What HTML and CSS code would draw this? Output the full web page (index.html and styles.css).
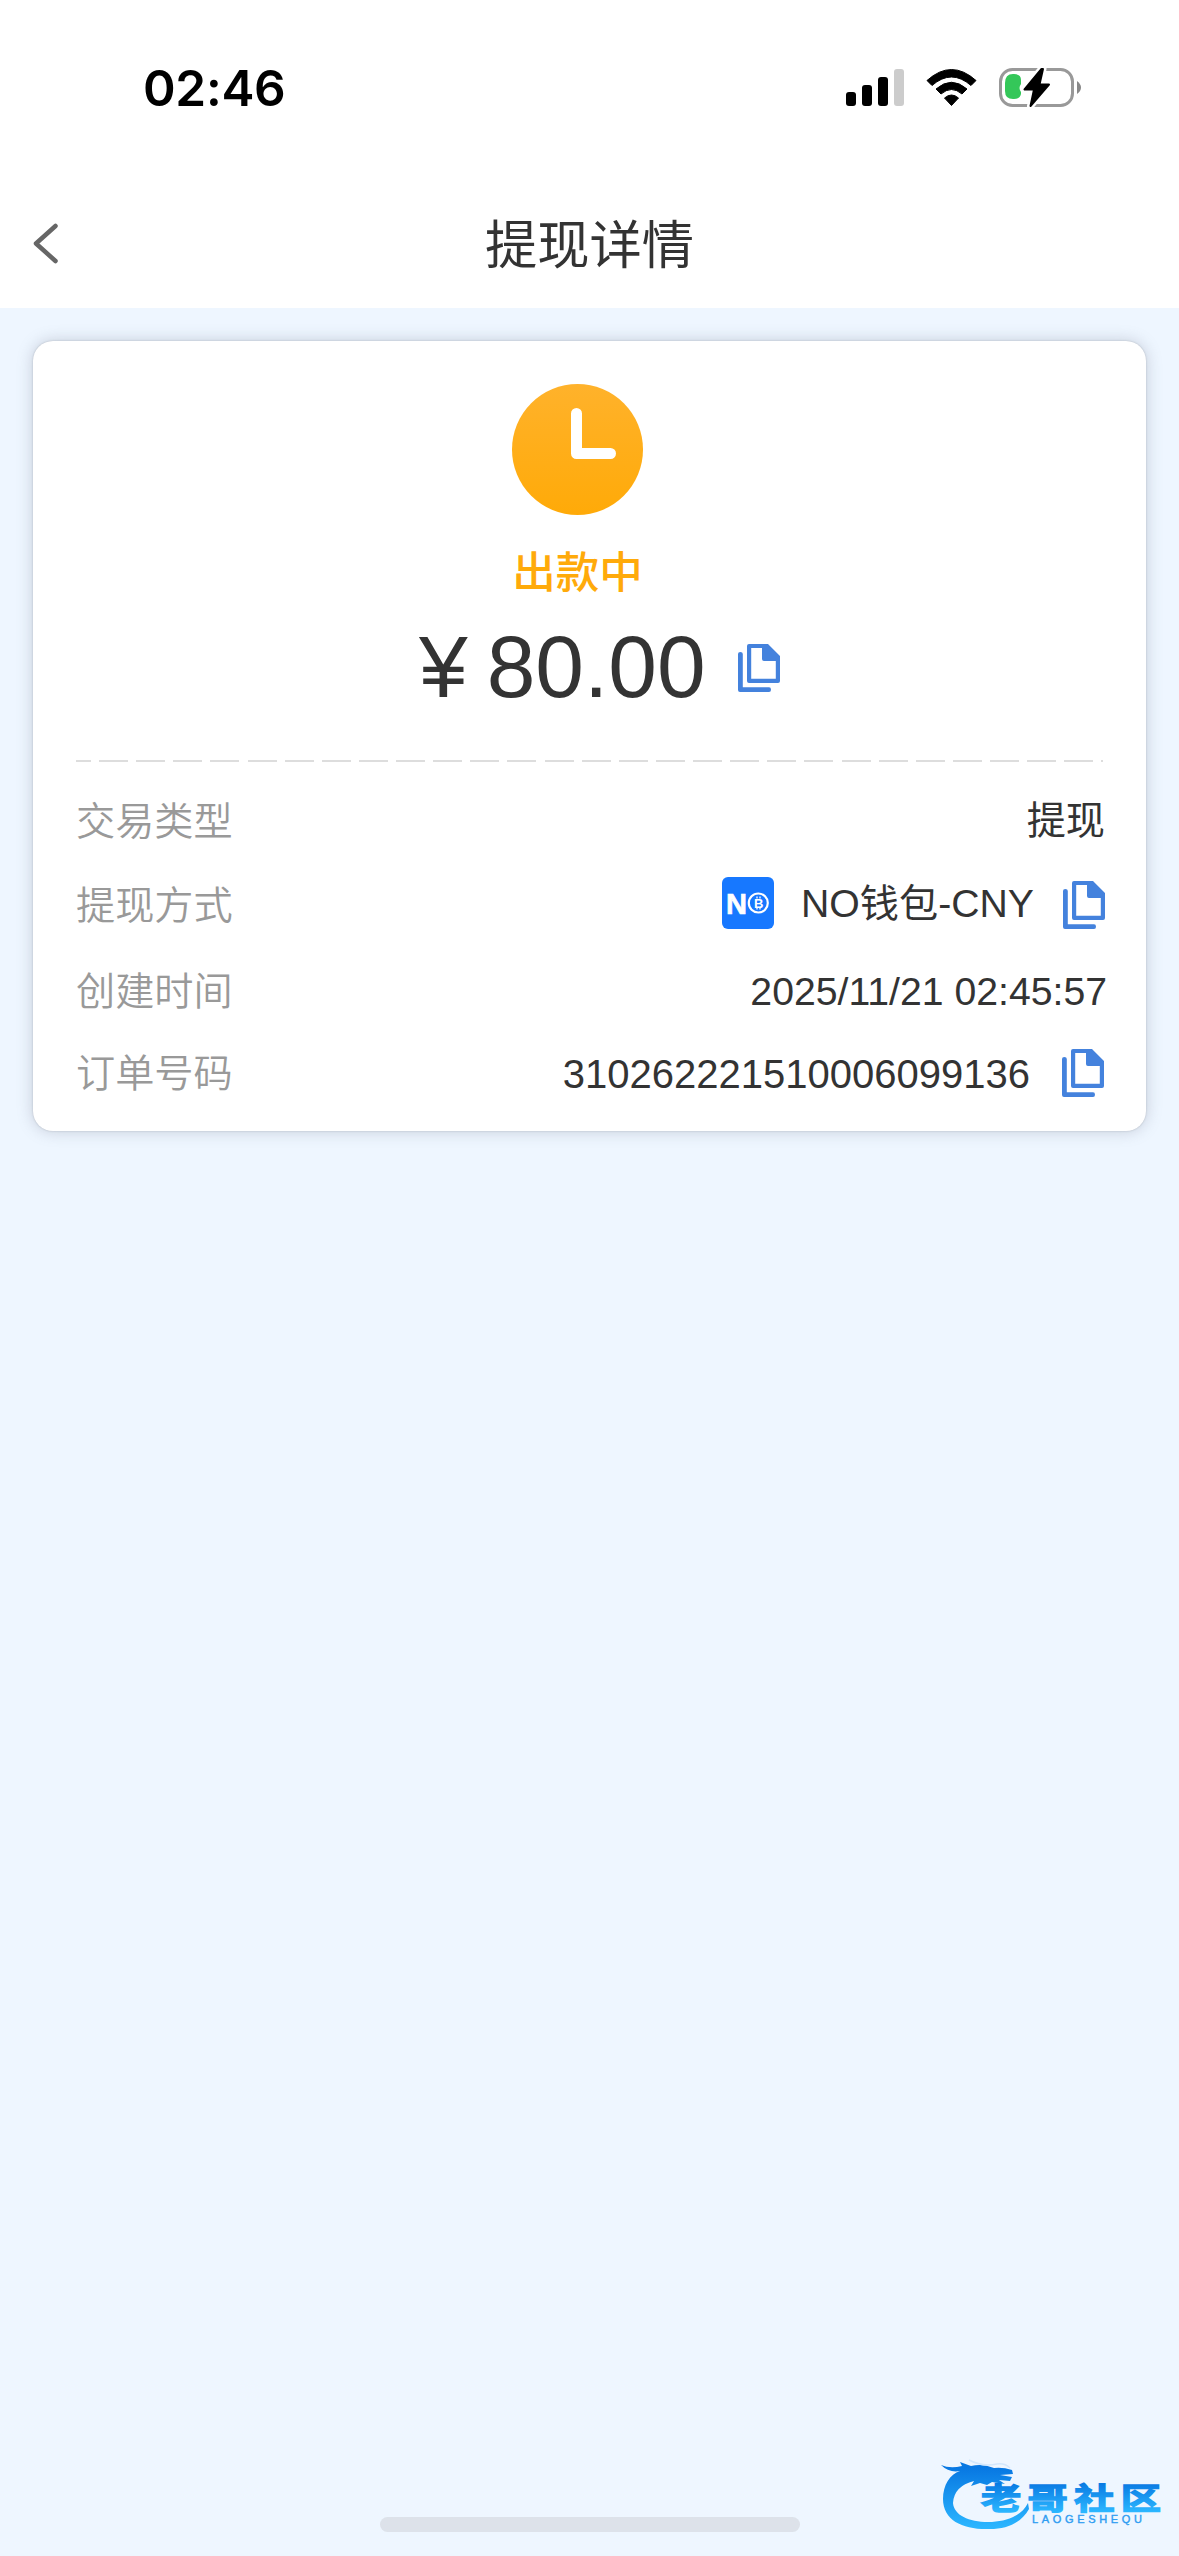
FILE: index.html
```html
<!DOCTYPE html>
<html lang="zh-CN">
<head>
<meta charset="utf-8">
<title>提现详情</title>
<link rel="stylesheet" href="styles.css">
</head>
<body>
<svg class="defs" width="0" height="0" aria-hidden="true">
  <symbol id="copy" viewBox="0 0 42 48">
    <path fill="#4482dd" fill-rule="evenodd" d="M11 0H30L42 12V37Q42 39 40 39H11Q9 39 9 37V2Q9 0 11 0ZM13.200 4V34.800H37.800V17H26Q24 17 24 15V4Z"/>
    <path fill="#4482dd" d="M0 10Q0 8 2.300 8Q4.800 8 4.800 10V43.300H31Q33 43.300 33 45.700Q33 48 31 48H2Q0 48 0 46Z"/>
  </symbol>
</svg>
<div class="statusbar">
  <span class="time">02:46</span>
  <svg class="indicators" width="236" height="44" viewBox="0 0 236 44">
    <rect x="0" y="26" width="10" height="14" rx="3"/>
    <rect x="16" y="19" width="10" height="21" rx="3"/>
    <rect x="32" y="11" width="10" height="29" rx="3"/>
    <rect x="48" y="3" width="10" height="37" rx="3" fill="#ccc"/>
    <path d="M81 14.500Q105.500 -7.500 130 14.500L125 19.500Q105.500 2.500 86 19.500Z" stroke="#000" stroke-linejoin="round" stroke-width="1"/>
    <path d="M90 23Q105.500 9.500 121 23L116 28Q105.500 19 95 28Z" stroke="#000" stroke-linejoin="round" stroke-width="1"/>
    <path d="M98.500 32Q105.500 26 112.500 32L105.500 39.500Z" stroke="#000" stroke-linejoin="round" stroke-width="1"/>
    <rect x="154.500" y="3.500" width="72" height="36" rx="12" fill="none" stroke="#999" stroke-width="3"/>
    <path d="M231 15Q235 18 235 21.500Q235 25 231 28Z" fill="#888"/>
    <path d="M159 17Q159 8 167 8H168Q175 8 175 14V18Q172 22 175 26V28Q174 33 168 33H167Q159 33 159 25Z" fill="#34c759"/>
    <path d="M195.500 3L178.500 23.500H188L184.500 40L203 18.500H193.500L197 3Z" stroke="#fff" stroke-width="7" stroke-linejoin="round"/>
    <path d="M195.500 3L178.500 23.500H188L184.500 40L203 18.500H193.500L197 3Z" stroke="#000" stroke-width="2" stroke-linejoin="round"/>
  </svg>
</div>
<header class="navbar">
  <svg class="back" width="26" height="42" viewBox="0 0 26 42"><path d="M23.500 3L4 20.500L23.500 38" fill="none" stroke="#666" stroke-width="4.500" stroke-linecap="round" stroke-linejoin="round"/></svg>
  <h1 class="title">提现详情</h1>
</header>
<main class="content">
  <section class="card">
    <div class="summary">
      <svg class="clock" width="131" height="131" viewBox="0 0 131 131">
        <defs><linearGradient id="sun" x2="0" y2="1"><stop stop-color="#ffb22b"/><stop offset="1" stop-color="#ffaa08"/></linearGradient></defs>
        <circle cx="65.500" cy="65.500" r="65.500" fill="url(#sun)"/>
        <path d="M64.500 29.500V69.500H98.500" fill="none" stroke="#fff" stroke-width="11" stroke-linecap="round" stroke-linejoin="round"/>
      </svg>
      <p class="state">出款中</p>
    </div>
    <div class="amount"><span>¥</span><span class="number">80.00</span><svg class="copy" width="42" height="48"><use href="#copy"/></svg></div>
    <div class="divider"></div>
    <dl class="details">
      <div class="row"><dt>交易类型</dt><dd>提现</dd></div>
      <div class="row method"><dt>提现方式</dt><dd>
        <svg class="wallet" width="52" height="52" viewBox="0 0 52 52">
          <rect width="52" height="52" rx="6" fill="#1778ff"/>
          <text x="4" y="36.500" class="wallet-n" textLength="21" lengthAdjust="spacingAndGlyphs">N</text>
          <circle cx="36.300" cy="26" r="9.500" fill="none" stroke="#fff" stroke-width="2.200"/>
          <text x="36.800" y="30.800" class="wallet-b" text-anchor="middle">B</text>
          <path d="M35 19.500V21.500M38 19.500V21.500M35 30.500V32.500M38 30.500V32.500" stroke="#fff" stroke-width="1.300"/>
        </svg>
        <span class="method-name">NO钱包-CNY</span><svg class="copy" width="42" height="48"><use href="#copy"/></svg></dd></div>
      <div class="row created"><dt>创建时间</dt><dd>2025/11/21 02:45:57</dd></div>
      <div class="row order"><dt>订单号码</dt><dd><span>310262221510006099136</span><svg class="copy" width="42" height="48"><use href="#copy"/></svg></dd></div>
    </dl>
  </section>
</main>
<div class="home-indicator"></div>
<svg class="watermark" width="230" height="86" viewBox="0 0 230 86">
  <defs><linearGradient id="sea" gradientUnits="userSpaceOnUse" x1="0" y1="12" x2="0" y2="72"><stop stop-color="#0878e2"/><stop offset="1" stop-color="#2bb6ff"/></linearGradient>
  <linearGradient id="word" gradientUnits="userSpaceOnUse" x1="0" y1="-26" x2="0" y2="3"><stop stop-color="#0878e2"/><stop offset="1" stop-color="#2bb6ff"/></linearGradient></defs>
  <path fill="url(#sea)" d="M1 9Q10 13 22 10L20 6L31 10Q42 7 54 12Q63 11 72 14L73 18L60 19L72 21L70 25L59 24L65 28L52 26L47 29L40 27L31 30L34 25Q14 30 13 47C14 60 31 67 52 66C69 65 82 59 88 47L89 53C81 67 67 73 50 73C24 74 3 65 3 43C3 29 10 18 20 15Q9 17 1 9Z"/>
  <path d="M29 4Q42 11 57 8Q65 7 70 12" fill="none" stroke="#d3e7fc" stroke-width="1.500"/>
  <text transform="translate(41 52.500) scale(1.34 1)" class="brand">老哥社区</text>
  <text x="92" y="66.500" class="brand-latin" textLength="110">LAOGESHEQU</text>
</svg>
</body>
</html>
```
FILE: styles.css
```css
* { box-sizing: border-box; margin: 0; padding: 0; }
body {
  position: relative;
  min-height: 2556px;
  background: #eef6ff;
  color: #333;
  font-family: "Liberation Sans", "Noto Sans CJK SC", sans-serif;
}
.defs { position: absolute; }
svg { display: block; flex: none; }
.statusbar {
  display: flex;
  justify-content: space-between;
  align-items: center;
  height: 176px;
  padding: 0 97px 0 143px;
  background: #fff;
}
.time { font: 600 49.500px/60px Inter, sans-serif; letter-spacing: -.3px; color: #000; }
.navbar {
  display: flex;
  align-items: center;
  height: 132px;
  padding: 3px 32px 0;
  background: #fff;
}
.title { flex: 1; padding: 4px 26px 0 0; text-align: center; font-size: 52.300px; font-weight: 400; line-height: 76px; }
.content { padding: 33px; }
.card {
  height: 790px;
  padding: 43px 43px 0;
  border-radius: 20px;
  background: #fff;
  box-shadow: 0 0 2px #b0b6c2, 0 0 16px rgba(110, 115, 135, .32);
}
.summary { display: flex; flex-direction: column; align-items: center; padding-right: 24px; }
.state { margin-top: 26px; font-size: 43.500px; font-weight: 500; line-height: 64px; color: #ffaa0a; }
.amount { display: flex; align-items: center; height: 100px; margin-top: 12px; padding-left: 343px; font-size: 87.500px; line-height: 100px; }
.number { margin-left: 19px; }
.amount .copy { margin: 2px 0 0 32px; }
.divider { height: 2px; margin-top: 43px; background: repeating-linear-gradient(90deg, #ddd 0 29px, transparent 29px 37.120px) -14px 0 / 1100px 2px; }
.details { padding-top: 17px; }
.row { display: flex; justify-content: space-between; align-items: center; height: 84px; font-size: 39.200px; line-height: 58px; }
.row dt { padding-top: 2px; color: #999; font-weight: 350; }
.row dd { display: flex; align-items: center; margin-right: -2px; }
.row .copy { margin-left: 29px; }
.wallet { margin: 0 27px 4px 0; }
.method-name { padding-bottom: 2px; font-size: 39.200px; }
.created { height: 88px; }
.row.created dd { margin-right: -4px; padding-top: 2px; }
.order { height: 76px; }
.row.order dd { margin-right: -1px; font-size: 40px; }
.order .copy { margin-left: 32px; }
.order span { padding-top: 2px; }
.wallet-n { font: 700 30px "Liberation Sans", sans-serif; fill: #fff; stroke: #fff; stroke-width: .7px; }
.wallet-b { font: 700 13px "Liberation Sans", sans-serif; fill: #fff; }
.home-indicator { position: absolute; left: 380px; top: 2517px; width: 420px; height: 15px; border-radius: 8px; background: #dde2ea; }
.watermark { position: absolute; left: 940px; top: 2456px; }
.brand { font: 700 30px "Noto Sans CJK SC", sans-serif; letter-spacing: 4.800px; fill: url(#word); stroke: url(#word); stroke-width: 1.500px; }
.brand-latin { font: 400 11px "Liberation Sans", sans-serif; fill: #2f9df2; stroke: #2f9df2; stroke-width: .4px; }
```
